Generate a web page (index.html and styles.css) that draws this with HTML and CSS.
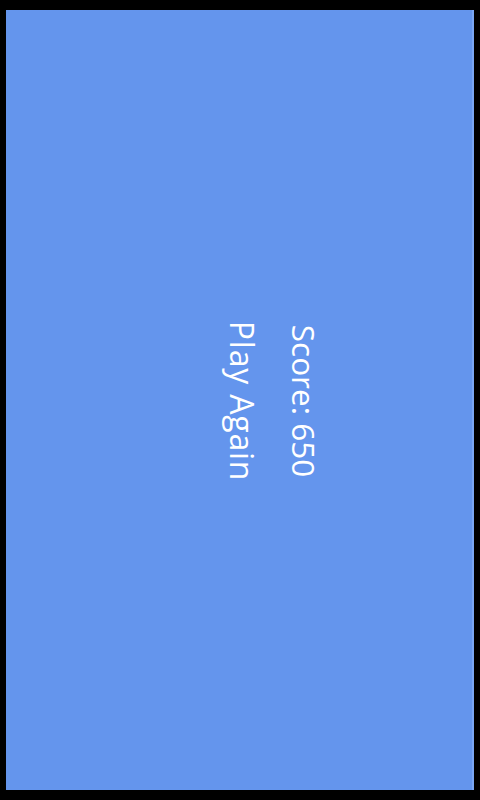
FILE: index.html
```html
<!DOCTYPE html>
<html>
<head>
<meta charset="utf-8">
<link rel="stylesheet" href="styles.css">
</head>
<body>
<div class="screen">
  <div class="panel">
    <div class="result">
      <div class="score">Score: 650</div>
      <div class="again">Play Again</div>
    </div>
  </div>
</div>
</body>
</html>
```
FILE: styles.css
```css
html, body {
  margin: 0;
  padding: 0;
  background: #000;
  width: 480px;
  height: 800px;
  overflow: hidden;
}
.screen {
  box-sizing: border-box;
  width: 480px;
  height: 800px;
  padding: 10px 6px 10px 6px;
}
.panel {
  box-sizing: border-box;
  width: 468px;
  height: 780px;
  background: #6495ed;
  border-right: 2px solid #7aa6f2;
  display: flex;
  align-items: center;
  justify-content: center;
}
.result {
  font-family: "Open Sans", sans-serif;
  line-height: 62px;
  color: #fff;
  text-align: center;
  transform: translate(34px, 1px) rotate(90deg);
  white-space: nowrap;
}
.score {
  font-size: 31.5px;
}
.again {
  font-size: 32px;
  letter-spacing: 0.8px;
}
```
